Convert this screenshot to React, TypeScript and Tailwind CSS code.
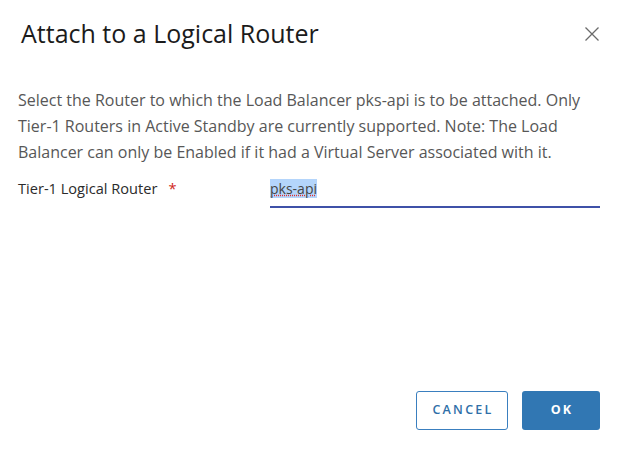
import React from 'react';

// Attach load balancer to router - modal
export default function App() {
  return (
    <div className="w-[624px] h-[456px] bg-white flex flex-col font-['Open_Sans',sans-serif]">
      {/* header */}
      <div className="flex items-start justify-between pl-[21px] pr-[24px] pt-[16px]">
        <h1 className="text-[25px] leading-[34px] text-[#1b1b1b] font-normal">Attach to a Logical Router</h1>
        <button className="mt-[10px] w-[16px] h-[16px] text-[#6b6b6b]">
          <svg viewBox="0 0 16 16" className="w-[16px] h-[16px]" fill="none" stroke="currentColor" strokeWidth="1.3">
            <path d="M1.5 1.5 L14.5 14.5 M14.5 1.5 L1.5 14.5" />
          </svg>
        </button>
      </div>

      {/* body */}
      <div className="px-[18px] pt-[37px]">
        <p className="text-[16px] leading-[26px] text-[#575757]">
          <span className="block whitespace-nowrap">Select the Router to which the Load Balancer pks-api is to be attached. Only</span>
          <span className="block whitespace-nowrap">Tier-1 Routers in Active Standby are currently supported. Note: The Load</span>
          <span className="block whitespace-nowrap">Balancer can only be Enabled if it had a Virtual Server associated with it.</span>
        </p>
        <div className="flex items-start mt-[13px]">
          <div className="w-[252px] flex text-[14.6px] leading-[20px] text-[#2b2b2b]">
            <span>Tier-1 Logical Router</span>
            <span className="ml-[11px] text-[#d0271b]">*</span>
          </div>
          <div className="w-[330px] border-b-2 border-[#3f51a8] pb-[7px] leading-[20px]">
            <span className="text-[14px] text-[#454545] bg-[#b4d5fb] underline decoration-dotted decoration-[#e03030]">pks-api</span>
          </div>
        </div>
      </div>

      <div className="flex-1" />

      {/* footer */}
      <div className="flex justify-end gap-[14px] pr-[24px] pb-[26px]">
        <button className="w-[92px] h-[39px] rounded-[3px] border border-[#3a7fbf] text-[#2f6fa8] text-[12.5px] font-semibold tracking-[0.18em] pl-[2px]">CANCEL</button>
        <button className="w-[78px] h-[39px] rounded-[3px] bg-[#3177b3] text-white text-[12.5px] font-bold tracking-[0.18em] pl-[2px]">OK</button>
      </div>
    </div>
  );
}
